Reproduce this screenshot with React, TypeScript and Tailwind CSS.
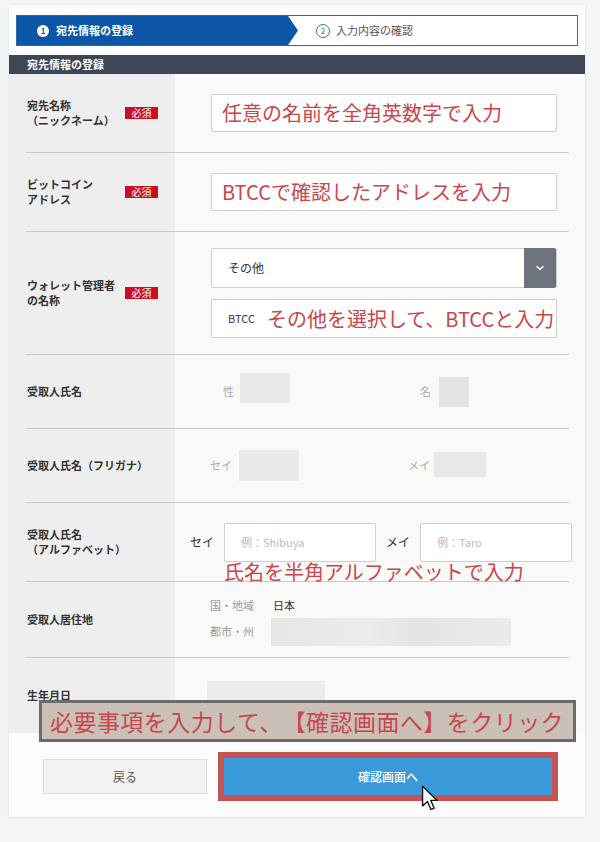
import { ChevronDown } from "lucide-react";
import type { ReactNode } from "react";

const jp = "font-['Noto_Sans_CJK_JP','Noto_Sans',sans-serif]";

function Badge() {
  return (
    <span className="flex h-[12px] w-[33px] shrink-0 items-center justify-center bg-[#c8101e] text-[10px] leading-none text-white">
      必須
    </span>
  );
}

function Row({
  h,
  label,
  required,
  last,
  children,
}: {
  h: string;
  label: ReactNode;
  required?: boolean;
  last?: boolean;
  children: ReactNode;
}) {
  return (
    <div
      className={`relative flex items-center ${h} ${
        last ? "" : "border-b border-[#c9c9c9]"
      }`}
    >
      <div className="flex w-[164px] shrink-0 items-center pl-[1px]">
        <div className="w-[98px] shrink-0 whitespace-nowrap text-[11px] font-semibold leading-[15px] text-[#333]">
          {label}
        </div>
        {required && <Badge />}
      </div>
      <div className="flex flex-1 items-center whitespace-nowrap [&>*]:shrink-0">
        {children}
      </div>
    </div>
  );
}

function Note({ children, className = "" }: { children: ReactNode; className?: string }) {
  return (
    <span
      className={`whitespace-nowrap text-[20px] leading-none text-[#c8474a] [text-spacing-trim:space-all] ${className}`}
    >
      {children}
    </span>
  );
}

function Cursor() {
  return (
    <svg
      width="18"
      height="27"
      viewBox="0 0 13 20"
      className="absolute left-[197px] top-[27px]"
    >
      <path
        d="M1 1 L1 15.5 L4.6 12.2 L7.2 18.2 L9.6 17.2 L7.1 11.4 L11.8 11.4 Z"
        fill="#fff"
        stroke="#111"
        strokeWidth="1"
        strokeLinejoin="round"
      />
    </svg>
  );
}

export default function App() {
  return (
    <div className={`min-h-[842px] bg-[#f4f5f7] pl-[9px] pt-[5px] ${jp}`}>
      <div className="relative w-[576px] bg-[#fcfcfc] shadow-[0_0_3px_rgba(0,0,0,0.1)]">
        {/* STEPPER */}
        <div className="px-[7px] pt-[10px]">
          <div className="flex h-[31px] border border-[#2f67a8] bg-white">
            <div className="flex w-[281px] items-center gap-[7px] bg-[#0b56a7] pl-[20px] [clip-path:polygon(0_0,271px_0,100%_50%,271px_100%,0_100%)]">
              <span className="flex h-[12px] w-[12px] items-center justify-center rounded-full bg-white text-[8px] font-bold leading-none text-[#0b56a7]">
                1
              </span>
              <span className="text-[11px] font-bold text-white">宛先情報の登録</span>
            </div>
            <div className="flex items-center gap-[6px] pl-[18px]">
              <span className="flex h-[14px] w-[14px] items-center justify-center rounded-full border border-[#3d6fa5] text-[8px] leading-none text-[#3d6fa5]">
                2
              </span>
              <span className="text-[11px] text-[#555]">入力内容の確認</span>
            </div>
          </div>
        </div>

        {/* SECTION BAR */}
        <div className="mt-[9px] flex h-[19px] items-center bg-[#3d4656] pl-[18px] text-[11px] font-bold text-white">
          宛先情報の登録
        </div>

        {/* FORM */}
        <div className="bg-[linear-gradient(to_right,#eeeeee_166px,#f9f9f9_166px)] pl-[17px] pr-[16px]">
          <Row
            h="h-[79px]"
            required
            label={
              <>
                宛先名称
                <br />
                （ニックネーム）
              </>
            }
          >
            <div className="ml-[21px] flex h-[38px] w-[346px] items-center rounded-[2px] border border-[#cfcfcf] bg-white pl-[10px]">
              <Note>任意の名前を全角英数字で入力</Note>
            </div>
          </Row>

          <Row
            h="h-[79px]"
            required
            label={
              <>
                ビットコイン
                <br />
                アドレス
              </>
            }
          >
            <div className="ml-[21px] flex h-[38px] w-[346px] items-center rounded-[2px] border border-[#cfcfcf] bg-white pl-[10px]">
              <Note>BTCCで確認したアドレスを入力</Note>
            </div>
          </Row>

          <Row
            h="h-[123px]"
            required
            label={
              <>
                ウォレット管理者
                <br />
                の名称
              </>
            }
          >
            <div className="ml-[21px] flex w-[346px] flex-col gap-[11px]">
              <div className="flex h-[40px] items-center rounded-[2px] border border-[#cfcfcf] bg-white">
                <span className="flex-1 pl-[16px] text-[12px] text-[#333]">その他</span>
                <span className="flex h-[40px] w-[32px] items-center justify-center rounded-r-[2px] bg-[#6c737c] text-white">
                  <ChevronDown size={12} strokeWidth={3} />
                </span>
              </div>
              <div className="flex h-[39px] items-center gap-[12px] rounded-[2px] border border-[#cfcfcf] bg-white pl-[16px]">
                <span className="text-[11px] text-[#333]">BTCC</span>
                <Note>その他を選択して、BTCCと入力</Note>
              </div>
            </div>
          </Row>

          <Row h="h-[74px]" label="受取人氏名">
            <span className="ml-[33px] text-[11px] text-[#aaa]">性</span>
            <span className="mb-[7px] ml-[6px] h-[30px] w-[50px] bg-[#e8e8e8]" />
            <span className="ml-[130px] text-[11px] text-[#aaa]">名</span>
            <span className="ml-[8px] mt-[1px] h-[30px] w-[30px] bg-[#e3e3e3]" />
          </Row>

          <Row h="h-[74px]" label="受取人氏名（フリガナ）">
            <span className="ml-[20px] text-[11px] text-[#aaa]">セイ</span>
            <span className="ml-[7px] h-[31px] w-[60px] bg-[#eaeaea]" />
            <span className="ml-[109px] text-[11px] text-[#aaa]">メイ</span>
            <span className="mb-[3px] ml-[4px] h-[25px] w-[52px] bg-[#e8e8e8]" />
          </Row>

          <Row
            h="h-[79px]"
            label={
              <>
                受取人氏名
                <br />
                （アルファベット）
              </>
            }
          >
            <span className="text-[12px] text-[#333]">セイ</span>
            <div className="ml-[10px] flex h-[39px] w-[152px] items-center rounded-[2px] border border-[#cfcfcf] bg-white pl-[16px] text-[11px] text-[#bbb]">
              例：Shibuya
            </div>
            <span className="ml-[10px] text-[12px] text-[#333]">メイ</span>
            <div className="ml-[10px] flex h-[39px] w-[152px] items-center rounded-[2px] border border-[#cfcfcf] bg-white pl-[16px] text-[11px] text-[#bbb]">
              例：Taro
            </div>
            <Note className="absolute left-[198px] top-[59px]">
              氏名を半角アルファベットで入力
            </Note>
          </Row>

          <Row h="h-[76px]" label="受取人居住地">
            <div className="ml-[20px] flex flex-col gap-[6px] pt-[4px]">
              <div className="flex items-center text-[11px] leading-[14px]">
                <span className="w-[63px] text-[#999]">国・地域</span>
                <span className="text-[#333]">日本</span>
              </div>
              <div className="flex items-center text-[11px]">
                <span className="w-[61px] text-[#999]">都市・州</span>
                <span className="h-[28px] w-[240px] bg-[linear-gradient(to_right,#e6e6e6,#ececec_40%,#e4e4e4_60%,#ebebeb)]" />
              </div>
            </div>
          </Row>

          <Row h="h-[75px]" last label="生年月日">
            <span className="ml-[17px] h-[30px] w-[118px] bg-[#ebebeb]" />
          </Row>
        </div>

        {/* BUTTONS */}
        <div className="flex items-center gap-[11px] pb-[16px] pl-[34px] pt-[19px]">
          <button className="h-[35px] w-[164px] border border-[#dcdcdc] bg-[#f2f2f2] text-[12px] text-[#555]">
            戻る
          </button>
          <div className="relative h-[49px] w-[340px] border-[6px] border-[#c65151]">
            <button className="h-full w-full bg-[#3a9ad9] text-[12px] font-medium text-white">
              確認画面へ
            </button>
            <Cursor />
          </div>
        </div>

        {/* ANNOTATION */}
        <div className="absolute left-[30px] top-[695px] flex h-[42px] w-[537px] items-center border-[3px] border-[#6b6b6b] bg-[#cbc0b8] pl-[8px]">
          <span className="whitespace-nowrap text-[23px] leading-none tracking-[0.45px] text-[#c8474a] [text-spacing-trim:space-all]">
            必要事項を入力して、【確認画面へ】をクリック
          </span>
        </div>
      </div>
    </div>
  );
}
